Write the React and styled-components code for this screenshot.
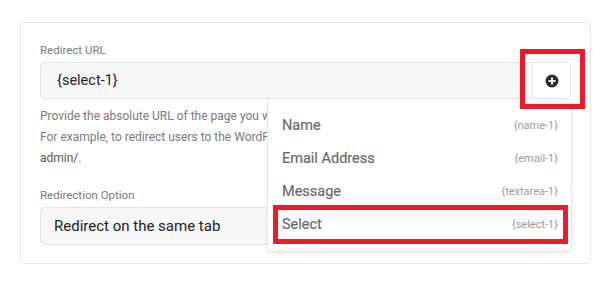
import React from "react";
import styled, { createGlobalStyle } from "styled-components";

const Global = createGlobalStyle`
  html, body { margin: 0; padding: 0; background: #ffffff; }
  body { font-family: Roboto, "Liberation Sans", Arial, sans-serif; }
  * { box-sizing: border-box; }
`;

const Page = styled.div`
  padding: 22px 19px 0 20px;
  width: 610px;
  height: 287px;
`;

const Card = styled.div`
  position: relative;
  width: 571px;
  height: 242px;
  border: 1px solid #e8e8e8;
  border-radius: 4px;
  padding: 19px 19px 0 19px;
  display: flex;
  flex-direction: column;
`;

const Label = styled.div`
  font-size: 11.5px;
  line-height: 16px;
  color: #7a7a7a;
  margin-bottom: 4px;
`;

const InputRow = styled.div`
  position: relative;
  display: flex;
  height: 37px;
  width: 531px;
  border: 1px solid #e4e4e4;
  border-radius: 4px;
  background: #f7f7f7;
`;

const InputText = styled.div`
  flex: 1;
  display: flex;
  align-items: center;
  padding-left: 16px;
  font-size: 14.5px;
  color: #262626;
`;

const AddButton = styled.div`
  position: relative;
  width: 38px;
  display: flex;
  align-items: center;
  justify-content: center;
  background: #ffffff;
  border-left: 1px solid #e4e4e4;
  border-radius: 0 4px 4px 0;
`;

const RedMark = styled.div`
  position: absolute;
  border: 5px solid #ea1c2a;
  pointer-events: none;
  z-index: 5;
`;

const ButtonMark = styled(RedMark)`
  left: -13px;
  top: -14px;
  width: 65px;
  height: 60px;
`;

const Help = styled.div`
  margin-top: 7px;
  font-size: 12px;
  line-height: 21px;
  color: #7a7a7a;
  white-space: nowrap;
  overflow: hidden;
  width: 531px;
`;

const Code = styled.span`
  color: #555555;
`;

const SecondLabel = styled(Label)`
  margin-top: 18px;
`;

const SelectBox = styled.div`
  height: 38px;
  width: 531px;
  border: 1px solid #e4e4e4;
  border-radius: 4px;
  background: #f7f7f7;
  display: flex;
  align-items: center;
  padding-left: 13px;
  font-size: 15px;
  color: #222222;
`;

const Dropdown = styled.div`
  position: absolute;
  left: 246px;
  top: 76px;
  width: 305px;
  height: 153px;
  background: #ffffff;
  border: 1px solid #e6e6e6;
  border-top: none;
  border-radius: 0 0 4px 4px;
  box-shadow: 0 2px 4px rgba(0, 0, 0, 0.06);
  padding-top: 10px;
  display: flex;
  flex-direction: column;
  z-index: 3;
`;

const Item = styled.div`
  position: relative;
  height: 33px;
  display: flex;
  align-items: center;
  justify-content: space-between;
  padding: 0 13px 0 14px;
`;

const ItemName = styled.span`
  font-size: 14.5px;
  font-weight: 400;
  color: #6a6a6a;
  -webkit-text-stroke: 0.2px #6a6a6a;
`;

const ItemTag = styled.span`
  font-size: 11px;
  color: #9c9c9c;
`;

const ItemMark = styled(RedMark)`
  left: 5px;
  right: 3px;
  top: -3px;
  bottom: -3px;
`;

const PlusIcon = () => (
  <svg width="14" height="14" viewBox="0 0 14 14">
    <circle cx="7" cy="7" r="6.5" fill="#2a2a2a" />
    <rect x="6.1" y="3.5" width="1.8" height="7" fill="#ffffff" />
    <rect x="3.5" y="6.1" width="7" height="1.8" fill="#ffffff" />
  </svg>
);

const items = [
  { name: "Name", tag: "{name-1}" },
  { name: "Email Address", tag: "{email-1}" },
  { name: "Message", tag: "{textarea-1}" },
  { name: "Select", tag: "{select-1}", marked: true },
];

export default function App() {
  return (
    <>
      <Global />
      <Page>
        <Card>
          <Label>Redirect URL</Label>
          <InputRow>
            <InputText>{"{select-1}"}</InputText>
            <AddButton>
              <PlusIcon />
              <ButtonMark />
            </AddButton>
          </InputRow>
          <Help>
            Provide the absolute URL of the page you want to redirect users to after the form is submitted.
            <br />
            For example, to redirect users to the WordPress dashboard, enter https://example.com/wp-
            <br />
            <Code>admin/</Code>.
          </Help>
          <SecondLabel>Redirection Option</SecondLabel>
          <SelectBox>Redirect on the same tab</SelectBox>
          <Dropdown>
            {items.map((it) => (
              <Item key={it.name}>
                <ItemName>{it.name}</ItemName>
                <ItemTag>{it.tag}</ItemTag>
                {it.marked && <ItemMark />}
              </Item>
            ))}
          </Dropdown>
        </Card>
      </Page>
    </>
  );
}
